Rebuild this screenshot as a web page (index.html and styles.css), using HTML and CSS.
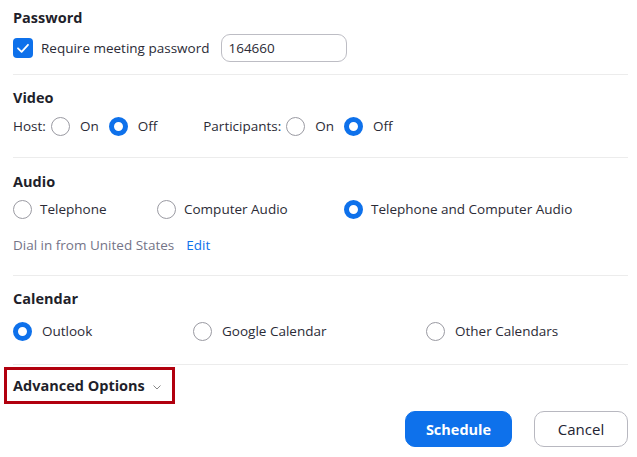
FILE: index.html
```html
<!DOCTYPE html>
<html>
<head>
<meta charset="utf-8">
<link rel="stylesheet" href="styles.css">
</head>
<body>
<div class="panel">
  <section class="sec sec-pw">
    <h2 class="title">Password</h2>
    <div class="row">
      <span class="check"><svg width="20" height="20" viewBox="0 0 20 20"><rect x="0" y="0" width="20" height="20" rx="4" fill="#0e71eb"/><path d="M5 10.3 L8.6 13.8 L15 6.8" fill="none" stroke="#fff" stroke-width="1.8" stroke-linecap="round" stroke-linejoin="round"/></svg></span>
      <span class="lbl">Require meeting password</span>
      <span class="input">164660</span>
    </div>
  </section>
  <section class="sec sec-video">
    <h2 class="title">Video</h2>
    <div class="row">
      <span class="lbl host">Host:</span>
      <span class="radio"></span><span class="lbl opt">On</span>
      <span class="radio on"></span><span class="lbl opt">Off</span>
      <span class="lbl part">Participants:</span>
      <span class="radio"></span><span class="lbl opt">On</span>
      <span class="radio on"></span><span class="lbl opt">Off</span>
    </div>
  </section>
  <section class="sec sec-audio">
    <h2 class="title">Audio</h2>
    <div class="row grid3 audio">
      <div class="choice"><span class="radio"></span><span class="lbl">Telephone</span></div>
      <div class="choice"><span class="radio"></span><span class="lbl">Computer Audio</span></div>
      <div class="choice"><span class="radio on"></span><span class="lbl">Telephone and Computer Audio</span></div>
    </div>
    <div class="dial"><span>Dial in from United States</span><a class="edit">Edit</a></div>
  </section>
  <section class="sec sec-cal">
    <h2 class="title">Calendar</h2>
    <div class="row grid3 cal">
      <div class="choice"><span class="radio on"></span><span class="lbl">Outlook</span></div>
      <div class="choice"><span class="radio"></span><span class="lbl">Google Calendar</span></div>
      <div class="choice"><span class="radio"></span><span class="lbl">Other Calendars</span></div>
    </div>
  </section>
  <div class="adv-wrap">
    <div class="adv">Advanced Options <svg class="chev" width="8" height="5" viewBox="0 0 8 5"><path d="M0.5 0.5 L4 4 L7.5 0.5" fill="none" stroke="#888" stroke-width="1"/></svg></div>
  </div>
  <div class="actions">
    <button class="btn primary">Schedule</button>
    <button class="btn">Cancel</button>
  </div>
</div>
</body>
</html>
```
FILE: styles.css
```css
* { box-sizing: border-box; }
html, body { margin: 0; padding: 0; background: #fff; }
body {
  font-family: "Open Sans", "Noto Sans", "Liberation Sans", sans-serif;
  font-size: 13.5px;
  color: #232333;
  width: 637px;
  height: 457px;
  overflow: hidden;
}
.panel { padding: 0 9px 0 13px; }
.sec { border-bottom: 1.5px solid #ececec; }
.title {
  margin: 0;
  font-size: 14.5px;
  font-weight: 700;
  color: #1f1f2b;
  line-height: 20px;
}
.row { display: flex; align-items: center; height: 28px; }
.lbl { color: #2b2b36; white-space: nowrap; }
.sec-pw { padding-top: 8px; height: 75px; }
.sec-pw .row { margin-top: 6px; }
.check { display: inline-flex; width: 20px; height: 20px; margin-right: 8px; }
.input {
  margin-left: 12px;
  width: 126px;
  height: 28px;
  border: 1px solid #bdbdc4;
  border-radius: 9px;
  padding-left: 6px;
  display: inline-flex;
  align-items: center;
  color: #2b2b36;
}
.sec-video { padding-top: 13px; height: 83px; }
.sec-video .row { margin-top: 4px; }
.radio {
  display: inline-block;
  width: 19px;
  height: 19px;
  border: 1px solid #9a9aa2;
  border-radius: 50%;
  flex: none;
}
.radio.on { border: 5px solid #0e71eb; }
.host { margin-right: 5px; }
.sec-video .radio { margin-right: 10px; }
.sec-video .opt { margin-right: 10px; }
.part { margin-left: 36px; margin-right: 5px; }
.sec-audio { padding-top: 14px; height: 118px; }
.grid3 { display: grid; }
.audio { grid-template-columns: 144px 187px 1fr; margin-top: 3px; }
.cal { grid-template-columns: 180px 233px 1fr; }
.choice { display: flex; align-items: center; }
.audio .radio { margin-right: 8px; }
.cal .radio { margin-right: 10px; }
.dial { margin-top: 13px; color: #747487; font-size: 13.5px; display: flex; }
.edit { color: #0e71eb; margin-left: 12px; }
.sec-cal { padding-top: 13px; height: 89px; }
.sec-cal .row { margin-top: 8px; }
.adv-wrap { padding-top: 2px; margin-left: -9px; }
.adv {
  display: inline-flex;
  align-items: center;
  width: 171px;
  height: 37px;
  border: 3px solid #b1000e;
  padding-left: 6px;
  font-weight: 700;
  font-size: 14.5px;
  color: #1f1f2b;
}
.chev { margin-left: 8px; margin-top: 3px; }
.actions { display: flex; justify-content: flex-end; gap: 22px; margin-top: 7px; padding-right: 0; }
.btn {
  font-family: inherit;
  height: 36px;
  border-radius: 10px;
  border: 1px solid #b8b8c0;
  background: #fff;
  font-size: 15px;
  color: #232333;
  width: 94px;
}
.btn.primary {
  background: #0e71eb;
  border-color: #0e71eb;
  color: #fff;
  font-weight: 700;
  width: 107px;
  font-size: 14.5px;
}
```
